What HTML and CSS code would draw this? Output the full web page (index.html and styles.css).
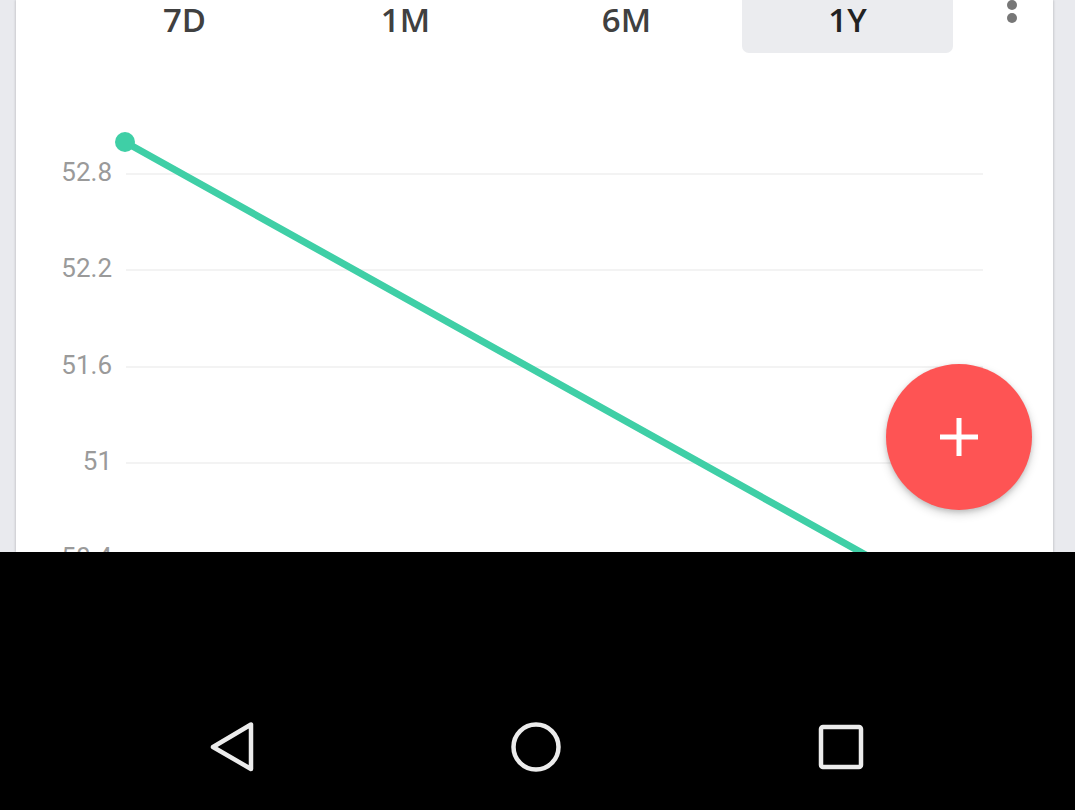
FILE: index.html
```html
<!DOCTYPE html>
<html>
<head>
<meta charset="utf-8">
<link rel="stylesheet" href="styles.css">
</head>
<body>
<div class="screen">
  <div class="content">
    <div class="card">
      <div class="tabs">
        <div class="tab">7D</div>
        <div class="tab">1M</div>
        <div class="tab">6M</div>
        <div class="tab active">1Y</div>
        <div class="menu"><span class="dot"></span><span class="dot"></span><span class="dot"></span></div>
      </div>
      <svg class="chart" width="1037" height="499" viewBox="0 0 1037 499">
        <g class="grid">
          <line x1="110" y1="121" x2="967" y2="121"/>
          <line x1="110" y1="217" x2="967" y2="217"/>
          <line x1="110" y1="314" x2="967" y2="314"/>
          <line x1="110" y1="410" x2="967" y2="410"/>
          <line x1="110" y1="506" x2="967" y2="506"/>
        </g>
        <g class="labels">
          <text x="96" y="128">52.8</text>
          <text x="96" y="224">52.2</text>
          <text x="96" y="321">51.6</text>
          <text x="96" y="417">51</text>
          <text x="96" y="513">50.4</text>
        </g>
        <line class="series" x1="109" y1="89" x2="900" y2="530"/>
        <circle class="point" cx="109" cy="89" r="10"/>
      </svg>
      <button class="fab">
        <svg width="54" height="54" viewBox="0 0 54 54"><path d="M27 8v38M8 27h38" stroke="#fff" stroke-width="5"/></svg>
      </button>
    </div>
  </div>
  <div class="navbar">
    <svg class="nav-icon" width="60" height="60" viewBox="0 0 60 60"><path d="M50 7.5v44.5L12 30z" fill="none" stroke="#ececec" stroke-width="4.5" stroke-linejoin="round"/></svg>
    <svg class="nav-icon" width="60" height="60" viewBox="0 0 60 60"><circle cx="30" cy="30" r="22.5" fill="none" stroke="#ececec" stroke-width="4.5"/></svg>
    <svg class="nav-icon" width="60" height="60" viewBox="0 0 60 60"><rect x="10" y="10" width="40" height="40" rx="2" fill="none" stroke="#ececec" stroke-width="4.5"/></svg>
  </div>
</div>
</body>
</html>
```
FILE: styles.css
```css
* { box-sizing: border-box; }
html, body { margin: 0; padding: 0; }
body {
  width: 1075px;
  height: 810px;
  overflow: hidden;
  font-family: Roboto, "Noto Sans", sans-serif;
}
.screen {
  display: flex;
  flex-direction: column;
  height: 810px;
}
.content {
  height: 552px;
  background: #e9eaee;
  padding: 0 22px 0 16px;
  overflow: hidden;
  display: flex;
}
.card {
  position: relative;
  flex: 1;
  background: #fff;
  box-shadow: -1px 0 2px rgba(0,0,0,0.12), 1px 0 2px rgba(0,0,0,0.12);
}
.tabs {
  display: flex;
  height: 53px;
  padding-left: 63px;
  gap: 10px;
}
.tab {
  width: 211px;
  height: 53px;
  display: flex;
  align-items: center;
  justify-content: center;
  padding-bottom: 14px;
  font-family: "Open Sans", sans-serif;
  font-weight: 600;
  font-size: 33px;
  line-height: 33px;
  color: #404040;
  border-radius: 0 0 7px 7px;
}
.tab.active {
  background: #ebecef;
  color: #222;
}
.menu {
  margin-left: 44px;
  margin-top: -13px;
  width: 10px;
  display: flex;
  flex-direction: column;
  gap: 3px;
}
.dot {
  width: 10px;
  height: 10px;
  border-radius: 50%;
  background: #777;
}
.chart { display: block; }
.grid line { stroke: #efefef; stroke-width: 1.5; }
.labels text {
  font-family: Roboto, sans-serif;
  font-size: 26px;
  fill: #9a9a9a;
  text-anchor: end;
}
.series { stroke: #3fcfa6; stroke-width: 7; stroke-linecap: round; }
.point { fill: #3fcfa6; }
.fab {
  position: absolute;
  left: 870px;
  top: 364px;
  width: 146px;
  height: 146px;
  border-radius: 50%;
  border: none;
  background: #fe5454;
  box-shadow: 0 4px 10px rgba(0,0,0,0.18), 0 2px 4px rgba(0,0,0,0.12);
  display: flex;
  align-items: center;
  justify-content: center;
  padding: 0;
}
.navbar {
  flex: 1;
  background: #000;
  display: flex;
  justify-content: center;
  align-items: flex-start;
  padding-top: 165px;
  padding-right: 4px;
  gap: 245px;
}
.nav-icon { display: block; }
```
